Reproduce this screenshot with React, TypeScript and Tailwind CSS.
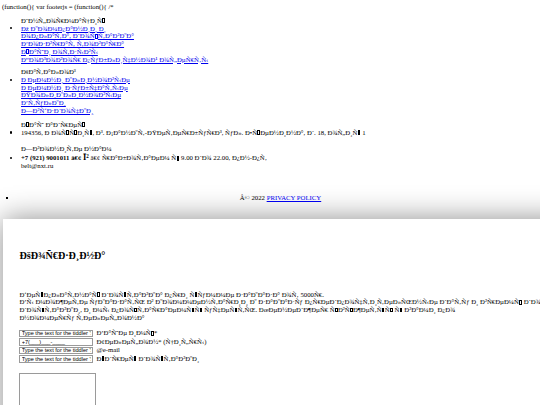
import React from "react";

// windows-1252 view of the bytes 0x80..0x9F ("" = byte the code page leaves undefined)
const CP1252 = [
  "\u20AC", "", "\u201A", "\u0192", "\u201E", "\u2026", "\u2020", "\u2021",
  "\u02C6", "\u2030", "\u0160", "\u2039", "\u0152", "", "\u017D", "",
  "", "\u2018", "\u2019", "\u201C", "\u201D", "\u2022", "\u2013", "\u2014",
  "\u02DC", "\u2122", "\u0161", "\u203A", "\u0153", "", "\u017E", "\u0178",
];

// utf-8 text read back as windows-1252, the way the page shows it;
// undefined bytes come out as the little missing-glyph box
const Moji = ({ text }: { text: string }) => {
  const parts: React.ReactNode[] = [];
  let buf = "";
  new TextEncoder().encode(text).forEach((b, i) => {
    const ch = b >= 0x80 && b < 0xa0 ? CP1252[b - 0x80] : String.fromCharCode(b);
    if (ch === "") {
      if (buf) parts.push(buf);
      buf = "";
      parts.push(
        <span
          key={i}
          className="mx-[0.3px] inline-block h-[4.8px] w-[2.6px] border-[0.6px] border-current align-[-0.3px]"
        />
      );
    } else {
      buf += ch;
    }
  });
  if (buf) parts.push(buf);
  return <>{parts}</>;
};

const infoLinks = [
  "О компании и",
  "оплата, доставка",
  "Возврат товара",
  "Наши отзывы",
  "Договор публичной оферты",
];

const catalogLinks = [
  "Ремни клиновые",
  "Ремни зубчатые",
  "Поликлиновые",
  "Втулки",
  "Звёздочки",
];

const Bullet = ({ children }: { children: React.ReactNode }) => (
  <div className="flex items-start">
    <span className="ml-[10px] mr-[8.7px] mt-[2.7px] size-[2.3px] shrink-0 rounded-full bg-black" />
    <div>{children}</div>
  </div>
);

const LinkList = ({ items }: { items: string[] }) => (
  <Bullet>
    {items.map((t) => (
      <a key={t} href="#" className="block text-[#0000ee] underline">
        <Moji text={t} />
      </a>
    ))}
  </Bullet>
);

const FormRow = ({ value, label }: { value: string; label: React.ReactNode }) => (
  <div className="flex h-[7.5px] items-center">
    <input
      readOnly
      defaultValue={value}
      className="h-[7.5px] w-[74px] shrink-0 border-[0.75px] border-[#9a9a9a] bg-white px-[1.2px] font-['Liberation_Sans',sans-serif] text-[5.6px] leading-none text-black outline-none"
    />
    <span className="ml-[3px] whitespace-nowrap">{label}</span>
  </div>
);

export default function App() {
  return (
    <div className="h-[405px] w-[540px] overflow-hidden bg-white font-['Liberation_Serif',serif] text-[6.75px] leading-[7.75px] text-black">
      <div className="pl-[2px] pt-[3px]">(function(){"{"} var footerjs = (function(){"{"} /*</div>

      {/* footer columns */}
      <div className="ml-[21px] mt-[6px]">
        <Moji text="Информация" />
      </div>
      <LinkList items={infoLinks} />

      <div className="ml-[21px] mt-[4.9px]">
        <Moji text="Каталог" />
      </div>
      <LinkList items={catalogLinks} />

      <div className="ml-[21px] mt-[6.2px]">
        <Moji text="Наш адрес" />
      </div>
      <Bullet>
        <span className="whitespace-nowrap">
          <Moji text="194356, Россия, г. Санкт-Петербург, ул. Есенина, д. 18, офис 1" />
        </span>
      </Bullet>

      <div className="ml-[21px] mt-[8.8px]">
        <Moji text="Звоните нам" />
      </div>
      <div className="mt-[1.5px]">
        <Bullet>
          <span className="whitespace-nowrap">
            <b>
              +7 (921) 9001011 <Moji text="•" /> <span className="text-[8.5px]">Ĩ</span>
              <sup>2</sup>
            </b>{" "}
            <Moji text="• работаем с 9.00 до 22.00, пн-пт" />
          </span>
          <div>belt@nxt.ru</div>
        </Bullet>
      </div>

      {/* copyright */}
      <div className="mt-[24px] flex items-start">
        <span className="ml-[6.3px] mt-[3.2px] size-[2.2px] shrink-0 bg-black" />
        <div className="w-[544px] shrink-0 text-center">
          <Moji text="© 2022 " />
          <a href="#" className="text-[#0000ee] underline">
            PRIVACY POLICY
          </a>
        </div>
      </div>

      {/* cart popup */}
      <div className="ml-[3.3px] mt-[17px] w-[720px] bg-white pb-[20px] pl-[16.2px] pt-[31px] shadow-[0_0_28px_rgba(0,0,0,0.45)]">
        <h2 className="text-[10.1px] font-bold leading-[11.6px]">
          <Moji text="Корзина" />
        </h2>

        <div className="mt-[29.4px] whitespace-nowrap">
          <div>
            <Moji text="Бесплатная доставка при сумме заказа от 5000р." />
          </div>
          <div>
            <Moji text="Вы можете указать в комментарии к заказу предпочтительные дату и время доставки и удобный для вас способ оплаты заказа" />
          </div>
          <div>
            <Moji text="доставки, и мы постараемся учесть. Менеджер свяжется с вами по" />
          </div>
          <div>
            <Moji text="номеру телефона" />
          </div>
        </div>

        <div className="mt-[8px] flex flex-col gap-[1px]">
          <FormRow value="Type the text for the tiddler 'Sidebar'" label={<Moji text="Ваше имя*" />} />
          <FormRow value="+7(___)___-____" label={<Moji text="Телефон* (цифры)" />} />
          <FormRow value="Type the text for the tiddler 'Sidebar'" label="@e-mail" />
          <FormRow value="Type the text for the tiddler 'Sidebar'" label={<Moji text="Адрес доставки" />} />
        </div>

        <textarea
          readOnly
          className="mt-[10.3px] block h-[44px] w-[76.5px] resize-none border-[0.75px] border-[#9a9a9a] bg-white outline-none"
        />
      </div>
    </div>
  );
}
